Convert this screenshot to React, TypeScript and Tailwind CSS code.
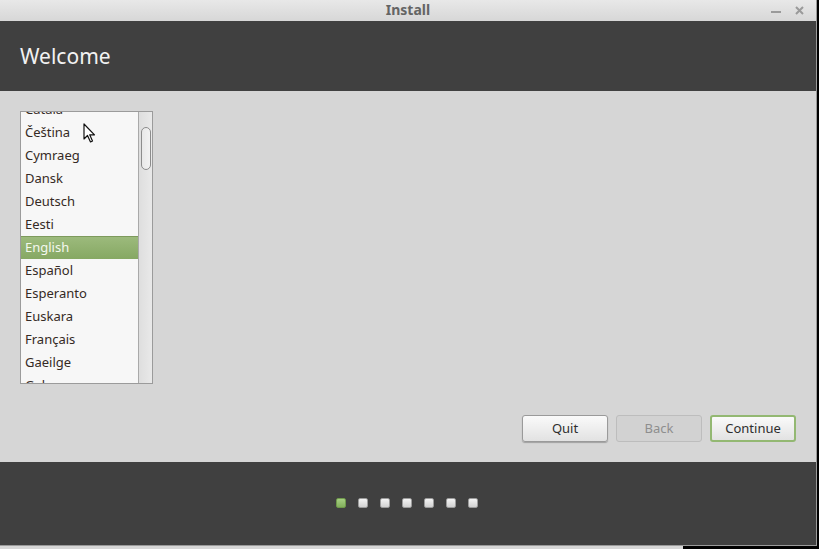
import React from "react";

const languages = [
  "Català",
  "Čeština",
  "Cymraeg",
  "Dansk",
  "Deutsch",
  "Eesti",
  "English",
  "Español",
  "Esperanto",
  "Euskara",
  "Français",
  "Gaeilge",
  "Galego",
];

function Cursor() {
  return (
    <svg
      className="absolute left-[83px] top-[123px]"
      width="14"
      height="21"
      viewBox="0 0 14 21"
    >
      <path
        d="M1 1 L1 16 L4.5 12.5 L7.5 19 L9.5 18 L6.7 11.8 L11.5 11.8 Z"
        fill="#ffffff"
        stroke="#111111"
        strokeWidth="1.2"
        strokeLinejoin="round"
      />
    </svg>
  );
}

function Button({
  label,
  variant,
}: {
  label: string;
  variant: "normal" | "disabled" | "default";
}) {
  const styles: Record<string, string> = {
    normal:
      "border-[#9a9a9a] bg-gradient-to-b from-[#fafafa] to-[#e2e2e2] text-[#2e2e2e] shadow-[0_1px_1px_rgba(0,0,0,0.25)]",
    disabled: "border-[#bdbdbd] bg-[#d2d2d2] text-[#8e8e8e]",
    default:
      "border-[#93b872] border-2 bg-gradient-to-b from-[#fafafa] to-[#e2e2e2] text-[#2e2e2e]",
  };
  return (
    <div
      className={`w-[86px] h-[27px] flex items-center justify-center rounded-[3px] border text-[13px] ${styles[variant]}`}
    >
      {label}
    </div>
  );
}

export default function App() {
  return (
    <div
      className="w-[819px] h-[549px] bg-black flex flex-col overflow-hidden"
      style={{ fontFamily: '"Noto Sans", "DejaVu Sans", sans-serif' }}
    >
      <div className="w-[817px] h-[546px] flex flex-col border-r border-b border-[#9a9a9a] relative">
        {/* title bar */}
        <div className="h-[21px] bg-gradient-to-b from-[#e8e8e8] to-[#d7d7d7] relative flex items-center justify-center">
          <span className="text-[14px] font-bold text-[#646464] leading-none -mt-[2px]">
            Install
          </span>
          <div className="absolute right-[12px] top-0 h-full flex items-center gap-[14px] text-[#8a8a8a]">
            <div className="w-[10px] h-[2px] bg-[#9a9a9a] mt-[2px]" />
            <svg width="9" height="9" viewBox="0 0 9 9">
              <path
                d="M1 1 L8 8 M8 1 L1 8"
                stroke="#9a9a9a"
                strokeWidth="2"
              />
            </svg>
          </div>
        </div>

        {/* header */}
        <div className="h-[70px] bg-[#404040] flex items-center pl-[20px]">
          <span className="text-[21px] text-[#f2f2f2] mt-[1px]">Welcome</span>
        </div>

        {/* content */}
        <div className="flex-1 bg-[#d6d6d6] flex flex-col px-[20px] pt-[20px]">
          <div className="w-[133px] h-[273px] border border-[#9b9b9b] flex bg-[#f7f7f7] overflow-hidden">
            <div className="w-[117px] overflow-hidden relative">
              <div className="flex flex-col -mt-[14px]">
                {languages.map((lang) => (
                  <div
                    key={lang}
                    className={`h-[23px] shrink-0 flex items-center pl-[4px] text-[13px] ${
                      lang === "English"
                        ? "bg-gradient-to-b from-[#9cba7c] to-[#86a863] text-[#f4f8ee] border-t border-[#7d9a5c]"
                        : "text-[#352a25]"
                    }`}
                  >
                    {lang}
                  </div>
                ))}
              </div>
            </div>
            <div className="w-[14px] border-l border-[#a9a9a9] bg-gradient-to-r from-[#dedede] to-[#e9e9e9] pt-[15px] flex justify-center">
              <div className="w-[10px] h-[43px] rounded-[5px] border border-[#8c8c8c] bg-gradient-to-r from-[#e8e8e8] to-[#f2f2f2]" />
            </div>
          </div>

          <div className="flex justify-end gap-[8px] mt-[31px] pr-0">
            <Button label="Quit" variant="normal" />
            <Button label="Back" variant="disabled" />
            <Button label="Continue" variant="default" />
          </div>
        </div>

        {/* footer */}
        <div className="h-[83px] bg-[#404040] flex items-center justify-center">
          <div className="flex gap-[12px] ml-[-3px] mt-[-1px]">
            {[0, 1, 2, 3, 4, 5, 6].map((i) => (
              <div
                key={i}
                className={`w-[10px] h-[10px] rounded-[2px] ${
                  i === 0
                    ? "bg-gradient-to-b from-[#a6cf82] to-[#83b05c] border border-[#6f9a4b]"
                    : "bg-gradient-to-b from-[#f4f4f4] to-[#d2d2d2] border border-[#9c9c9c]"
                }`}
              />
            ))}
          </div>
        </div>

        <Cursor />
      </div>
      <div className="flex h-[3px]">
        <div className="w-[683px] bg-[#d6d6d6]" />
        <div className="flex-1 bg-black" />
      </div>
    </div>
  );
}
